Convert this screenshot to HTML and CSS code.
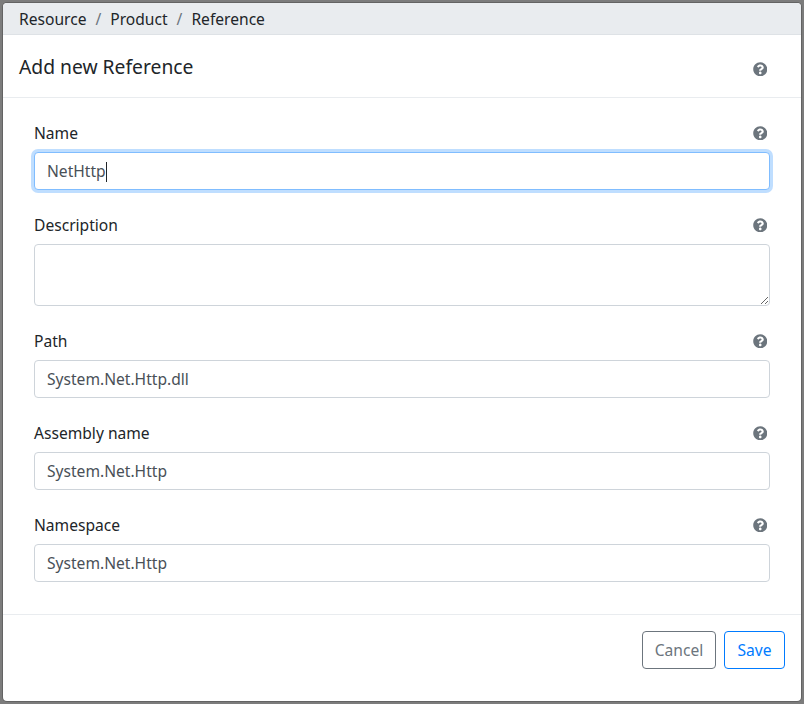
FILE: index.html
```html
<!DOCTYPE html>
<html lang="en">
<head>
<meta charset="utf-8">
<title>Add new Reference</title>
<link rel="stylesheet" href="styles.css">
</head>
<body>
<svg class="defs" width="0" height="0"><symbol id="q" viewBox="0 0 512 512"><path d="M504 256c0 136.997-111.043 248-248 248S8 392.997 8 256C8 119.083 119.043 8 256 8s248 111.083 248 248zM262.655 90c-54.497 0-89.255 22.957-116.549 63.758-3.536 5.286-2.353 12.415 2.715 16.258l34.699 26.31c5.205 3.947 12.621 3.008 16.665-2.122 17.864-22.658 30.113-35.797 57.303-35.797 20.429 0 45.698 13.148 45.698 32.958 0 14.976-12.363 22.667-32.534 33.976C247.128 238.528 216 254.941 216 296v4c0 6.627 5.373 12 12 12h56c6.627 0 12-5.373 12-12v-1.333c0-28.462 83.186-29.647 83.186-106.667 0-58.002-60.165-102-116.531-102zM256 338c-25.365 0-46 20.635-46 46 0 25.364 20.635 46 46 46s46-20.636 46-46c0-25.365-20.635-46-46-46z"/></symbol></svg>
<main class="modal">
  <nav class="crumbs"><span>Resource</span><i>/</i><span>Product</span><i>/</i><span>Reference</span></nav>
  <header class="head">
    <h1>Add new Reference</h1>
    <svg class="help"><use href="#q"/></svg>
  </header>
  <form class="body">
    <div class="group">
      <div class="row"><label>Name</label><svg class="help"><use href="#q"/></svg></div>
      <div class="control focus" role="textbox">NetHttp<span class="caret"></span></div>
    </div>
    <div class="group">
      <div class="row"><label>Description</label><svg class="help"><use href="#q"/></svg></div>
      <textarea class="control area"></textarea>
    </div>
    <div class="group">
      <div class="row"><label>Path</label><svg class="help"><use href="#q"/></svg></div>
      <input class="control" value="System.Net.Http.dll">
    </div>
    <div class="group">
      <div class="row"><label>Assembly name</label><svg class="help"><use href="#q"/></svg></div>
      <input class="control" value="System.Net.Http">
    </div>
    <div class="group">
      <div class="row"><label>Namespace</label><svg class="help"><use href="#q"/></svg></div>
      <input class="control" value="System.Net.Http">
    </div>
  </form>
  <footer class="foot">
    <button class="btn cancel" type="button">Cancel</button>
    <button class="btn save" type="button">Save</button>
  </footer>
</main>
</body>
</html>
```
FILE: styles.css
```css
* { box-sizing: border-box; }
html, body { height: 100%; }
body {
  margin: 0;
  padding: 3px;
  background: #7c7c7c;
  font-family: "Noto Sans", sans-serif;
  font-size: 15.6px;
  line-height: 24px;
  color: #212529;
  overflow: hidden;
}
.defs { position: absolute; }
.modal {
  width: 798px;
  height: 698px;
  background: #fff;
  border-radius: 4px;
  box-shadow: 0 0 0 1px rgba(0, 0, 0, .2);
  overflow: hidden;
  display: flex;
  flex-direction: column;
}
.crumbs {
  height: 32px;
  background: #e9ecef;
  padding: 4px 16px;
  display: flex;
  border-bottom: 1px solid #dee2e6;
}
.crumbs i { font-style: normal; color: #6c757d; padding: 0 9px; }
.head {
  height: 63px;
  flex: none;
  padding: 0 34px 0 16px;
  border-bottom: 1px solid #e9ecef;
  display: flex;
  align-items: center;
  justify-content: space-between;
}
.head h1 { padding-top: 2px; }
.head .help { margin-top: 6px; }
h1 { margin: 0; font-size: 19.3px; font-weight: 400; line-height: 28px; }
.help { width: 14.5px; height: 14.5px; fill: #6c757d; display: block; }
.row .help { margin-top: 1px; }
.body { padding: 22px 31px 32px; flex: none; }
.group { margin-bottom: 22px; }
.group:last-child { margin-bottom: 0; }
.row {
  display: flex;
  justify-content: space-between;
  align-items: center;
  margin-bottom: 8px;
  padding-right: 3px;
  padding-top: 1px;
  height: 24px;
}
.control {
  display: block;
  width: 100%;
  height: 38px;
  padding: 6px 12px;
  border: 1px solid #ced4da;
  border-radius: 4px;
  font: inherit;
  line-height: 24px;
  color: #495057;
  background: #fff;
  outline: none;
}
.area { height: 62px; resize: vertical; }
.focus { border-color: #80bdff; box-shadow: 0 0 0 3px rgba(0, 123, 255, .25); }
.caret { display: inline-block; width: 1px; height: 20px; background: #212529; vertical-align: -5px; }
.foot {
  flex: 1;
  border-top: 1px solid #e9ecef;
  padding: 16px;
  display: flex;
  justify-content: flex-end;
  align-items: flex-start;
  gap: 8px;
}
.btn {
  height: 38px;
  padding: 6px 0;
  background: #fff;
  border: 1px solid;
  border-radius: 4px;
  font: inherit;
}
.cancel { width: 74px; color: #6c757d; border-color: #6c757d; }
.save { width: 61px; color: #007bff; border-color: #007bff; }
```
